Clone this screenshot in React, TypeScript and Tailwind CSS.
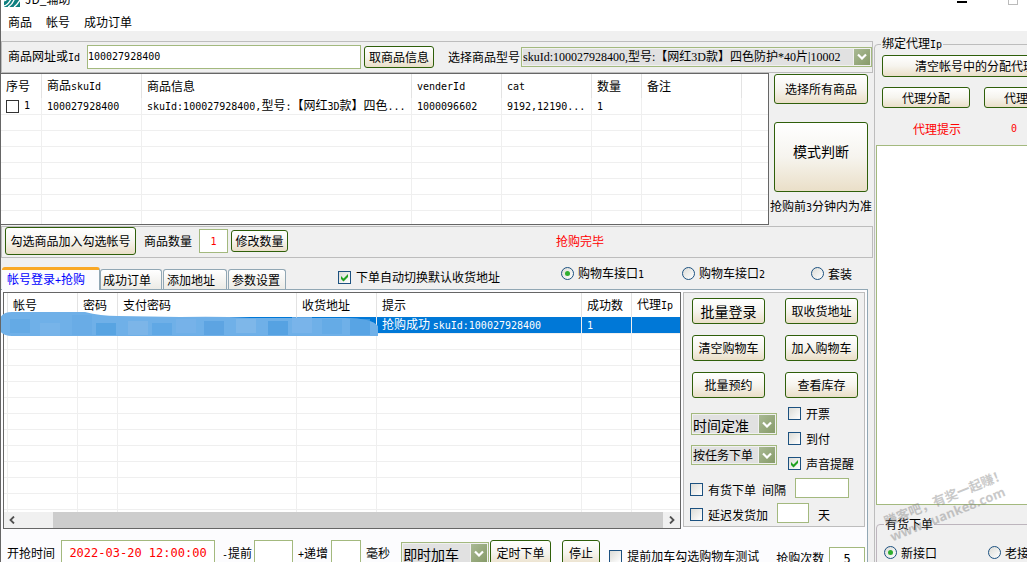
import { Fragment, type ReactNode } from 'react'
import clsx from 'clsx'

const buttonBase =
  'shrink-0 overflow-hidden whitespace-nowrap rounded-[3px] border border-[#2f5f0a] bg-linear-to-b from-white via-[#f6f4ee] to-[#eadfc8]'
const fieldBase = 'min-w-0 border border-[#a3b97e] bg-white font-["DejaVu_Sans_Mono"] outline-none'

// Latin runs are set smaller so that two of them are as wide as one Chinese character
function Mixed({ text }: { text: string }) {
  return (
    <>
      {text.split(/([\x21-\x7e][\x20-\x7e]*)/).map((part, i) =>
        i % 2 ? (
          <span key={i} className="font-['DejaVu_Sans_Mono'] text-[10px]">
            {part}
          </span>
        ) : (
          <Fragment key={i}>{part}</Fragment>
        ),
      )}
    </>
  )
}

function Btn({ children, className }: { children: ReactNode; className?: string }) {
  return (
    <button type="button" className={clsx(buttonBase, className)}>
      {children}
    </button>
  )
}

function Check({ label, checked, className }: { label: string; checked?: boolean; className?: string }) {
  return (
    <label className={clsx('flex shrink-0 items-center gap-[5px] whitespace-nowrap', className)}>
      <span className="relative h-[13px] w-[13px] shrink-0">
        <input
          type="checkbox"
          defaultChecked={checked}
          className="peer block h-[13px] w-[13px] appearance-none border border-[#1c5180] bg-linear-to-br from-[#dcdcd7] to-white"
        />
        <svg viewBox="0 0 13 13" className="pointer-events-none absolute inset-0 hidden peer-checked:block">
          <path d="M3 5v3l2.500 2.500L10 6V3L5.500 7.500z" fill="#21a121" />
        </svg>
      </span>
      <span>
        <Mixed text={label} />
      </span>
    </label>
  )
}

function Radio({ label, name, checked, className }: { label: string; name: string; checked?: boolean; className?: string }) {
  return (
    <label className={clsx('flex h-[13px] shrink-0 items-center gap-1 whitespace-nowrap', className)}>
      <span className="relative h-[13px] w-[13px] shrink-0">
        <input
          type="radio"
          name={name}
          defaultChecked={checked}
          className="peer block h-[13px] w-[13px] appearance-none rounded-full border border-[#1c5180] bg-linear-to-br from-[#dcdcd7] to-white"
        />
        <span className="pointer-events-none absolute top-1 left-1 hidden h-[5px] w-[5px] rounded-full bg-[#2fae2f] peer-checked:block" />
      </span>
      <span>
        <Mixed text={label} />
      </span>
    </label>
  )
}

function Drop({ id, label, value, className }: { id: string; label: string; value: string; className?: string }) {
  return (
    <span className={clsx('relative block shrink-0 border border-[#a3b97e] bg-[#f0f0f0] p-px', className)}>
      <select
        id={id}
        aria-label={label}
        className="block h-full w-full appearance-none overflow-hidden bg-[#e1e1e1] bg-clip-content pr-[17px] outline-none"
      >
        <option>{value}</option>
      </select>
      <span className="pointer-events-none absolute inset-y-px right-px flex w-4 items-center justify-center bg-linear-to-br from-[#a9b994] to-[#879b69]">
        <svg width="10" height="7" viewBox="0 0 10 7">
          <path d="M1 1.500 5 5.500 9 1.500" fill="none" stroke="#fff" strokeWidth="2.200" />
        </svg>
      </span>
    </span>
  )
}

const goodsCols = [
  { title: '序号', width: 'w-[41px]' },
  { title: '商品skuId', width: 'w-[100px]' },
  { title: '商品信息', width: 'w-[270px]' },
  { title: 'venderId', width: 'w-[90px]' },
  { title: 'cat', width: 'w-[90px]' },
  { title: '数量', width: 'w-[50px]' },
  { title: '备注', width: 'w-[100px]' },
  { title: '', width: '' },
]
const goodsRow = ['1', '100027928400', 'skuId:100027928400,型号:【网红3D款】四色...', '1000096602', '9192,12190...', '1', '', '']

const accountCols = [
  { title: '', width: 'w-1' },
  { title: '帐号', width: 'w-[70px]' },
  { title: '密码', width: 'w-10' },
  { title: '支付密码', width: 'w-[179px]' },
  { title: '收货地址', width: 'w-20' },
  { title: '提示', width: 'w-[205px]' },
  { title: '成功数', width: 'w-[50px]' },
  { title: '代理Ip', width: '' },
]
const accountRow = ['', '', '', '', '', '抢购成功 skuId:100027928400', '1', '']

interface GridProps {
  cols: { title: string; width: string }[]
  row: string[]
  blanks: number
  selected?: boolean
  pickable?: boolean
}

function Grid({ cols, row, blanks, selected, pickable }: GridProps) {
  const last = cols.length - 1
  return (
    <table className="w-full table-fixed border-separate border-spacing-0 text-left">
      <thead>
        <tr>
          {cols.map((c, i) => (
            <th
              key={i}
              className={clsx(
                'h-6 p-0 font-normal whitespace-nowrap',
                c.width,
                c.title && 'pl-[5px]',
                i < last && 'border-r border-[#e3e3e3]',
              )}
            >
              <Mixed text={c.title} />
            </th>
          ))}
        </tr>
      </thead>
      <tbody>
        <tr className={clsx(selected && 'bg-[#0078d7] text-white')}>
          {row.map((cell, i) => (
            <td
              key={i}
              className={clsx(
                'h-4 border-b border-[#efefef] p-0 whitespace-nowrap',
                cell && 'pl-[5px]',
                i < last && 'border-r',
              )}
            >
              {pickable && i === 0 ? (
                <label className="flex items-center gap-[5px]">
                  <input type="checkbox" className="h-[13px] w-[13px] appearance-none border border-[#333] bg-white" />
                  <Mixed text={cell} />
                </label>
              ) : (
                <Mixed text={cell} />
              )}
            </td>
          ))}
        </tr>
        {Array.from({ length: blanks }, (_, r) => (
          <tr key={r}>
            {cols.map((_, i) => (
              <td key={i} className={clsx('h-4 border-b border-[#efefef] p-0', i < last && 'border-r')} />
            ))}
          </tr>
        ))}
      </tbody>
    </table>
  )
}

function TitleBar() {
  return (
    <header className="bg-white">
      <div className="flex h-3 items-end gap-[5px] overflow-hidden pb-[5px] pl-[3px]">
        <svg width="16" height="16" viewBox="0 0 16 16" className="shrink-0">
          <rect width="16" height="16" fill="#0e8080" />
          <path
            d="M0 10q3-1 5-5t5-5M0 15q4-1 7-7t8-8M4 16q4-2 6-7t6-6M10 16q3-2 6-7"
            fill="none"
            stroke="#fff"
            strokeWidth="1.300"
          />
        </svg>
        <span className="leading-4">JD_辅助</span>
        <span className="mr-9 mb-1 ml-auto h-[2px] w-[10px] bg-black" />
        <span className="mr-[9px] mb-[2px] h-[10px] w-[10px] border border-[#bbb]" />
      </div>
      <nav className="flex h-[19px] items-center gap-[14px] pl-[7px]">
        <a href="#goods">商品</a>
        <a href="#account">帐号</a>
        <a href="#orders">成功订单</a>
      </nav>
    </header>
  )
}

function GoodsSection() {
  return (
    <>
      <div className="mt-[10px] flex h-8 items-center border border-[#bdbdbd] pb-px pl-[6px]">
        <label htmlFor="url" className="w-[79px] shrink-0">
          <Mixed text="商品网址或Id" />
        </label>
        <input id="url" defaultValue="100027928400" className={clsx(fieldBase, 'h-6 flex-1 text-[10px]')} />
        <Btn className="ml-[3px] h-[22px] w-[70px]">取商品信息</Btn>
        <label htmlFor="model" className="ml-[14px] shrink-0">
          选择商品型号
        </label>
        <Drop
          id="model"
          label="选择商品型号"
          value="skuId:100027928400,型号:【网红3D款】四色防护*40片|10002"
          className="ml-px h-5 w-[351px] indent-[2px] font-['Liberation_Serif','Noto_Sans_CJK_SC',serif]"
        />
      </div>
      <div className="flex h-[152px]">
        <div className="min-w-0 flex-1 overflow-hidden border border-l-0 border-[#666] bg-white">
          <Grid cols={goodsCols} row={goodsRow} blanks={7} pickable />
        </div>
        <div className="flex w-[104px] shrink-0 flex-col items-center pt-px">
          <Btn className="h-[30px] w-[94px]">选择所有商品</Btn>
          <Btn className="mt-[18px] h-[70px] w-[94px] pb-3 text-sm">模式判断</Btn>
          <p className="mt-[7px] whitespace-nowrap">
            <Mixed text="抢购前3分钟内为准" />
          </p>
        </div>
      </div>
      <div className="mt-px flex h-8 items-center border border-[#bdbdbd] pb-[2px] pl-[3px]">
        <Btn className="h-7 w-[131px]">勾选商品加入勾选帐号</Btn>
        <label htmlFor="count" className="ml-2 shrink-0">
          商品数量
        </label>
        <input
          id="count"
          defaultValue="1"
          className={clsx(fieldBase, 'ml-[7px] h-6 w-[29px] text-center text-[10px] text-[#f00]')}
        />
        <Btn className="ml-[3px] h-[22px] w-[57px]">修改数量</Btn>
        <p className="ml-[268px] text-[#f00]">抢购完毕</p>
      </div>
    </>
  )
}

function TabRow() {
  const tab =
    'h-5 shrink-0 self-end rounded-t-[3px] border border-b-0 border-[#91a7b4] bg-linear-to-b from-white to-[#ecebe6] text-left whitespace-nowrap'
  return (
    <div className="mt-[9px] flex h-[22px] items-start pl-px">
      <div role="tablist" className="flex h-full gap-px">
        <button
          type="button"
          role="tab"
          aria-selected="true"
          className="relative -mr-px -mb-px w-[98px] shrink-0 rounded-t-[3px] border-t-3 border-r border-t-[#f9a825] border-r-[#91a7b4] bg-[#fcfcfe] pl-[5px] text-left whitespace-nowrap text-[#00f]"
        >
          <Mixed text="帐号登录+抢购" />
        </button>
        <button type="button" role="tab" className={clsx(tab, 'w-[62px] pl-[2px]')}>成功订单</button>
        <button type="button" role="tab" className={clsx(tab, 'w-16 pl-[3px]')}>添加地址</button>
        <button type="button" role="tab" className={clsx(tab, 'w-[58px] pl-[3px]')}>参数设置</button>
      </div>
      <Check label="下单自动切换默认收货地址" checked className="mt-[3px] ml-[52px]" />
      <Radio name="cart" label="购物车接口1" checked className="ml-[61px]" />
      <Radio name="cart" label="购物车接口2" className="ml-[38px]" />
      <Radio name="cart" label="套装" className="ml-[46px]" />
    </div>
  )
}

const smudges = [
  [10, 8, 14, '#5fa8e4'], [40, 12, 16, '#7bb6ea'], [72, 4, 20, '#66abe6'], [96, 12, 12, '#4f9fe0'],
  [128, 10, 14, '#82b8e8'], [152, 12, 12, '#5aa5e4'], [176, 8, 14, '#79b4e9'], [204, 10, 14, '#559fdf'],
  [236, 8, 14, '#84baea'], [268, 10, 14, '#4c9ce0'], [292, 6, 16, '#7db7eb'], [322, 8, 15, '#61a9e5'],
  [350, 8, 16, '#4fa0e2'],
] as const

function AccountTable() {
  return (
    <div className="relative h-[237px] min-w-0 flex-1">
      <div className="flex h-full flex-col border border-[#666] bg-white">
        <div className="min-h-0 flex-1 overflow-hidden">
          <Grid cols={accountCols} row={accountRow} blanks={12} selected />
        </div>
        <div className="flex h-4 shrink-0 items-center justify-between bg-[#f0f0f0] px-1">
          <svg width="8" height="8" viewBox="0 0 8 8" className="shrink-0">
            <path d="M6 .500 2.500 4 6 7.500" fill="none" stroke="#505050" strokeWidth="1.800" />
          </svg>
          <span className="ml-[37px] h-full flex-1 bg-[#cdcdcd]" />
          <svg width="8" height="8" viewBox="0 0 8 8" className="ml-[5px] shrink-0">
            <path d="M2 .500 5.500 4 2 7.500" fill="none" stroke="#505050" strokeWidth="1.800" />
          </svg>
        </div>
      </div>
      <svg width="379" height="26" viewBox="0 0 379 26" className="pointer-events-none absolute top-[19px] -left-[3px]">
        <path
          d="M0 7Q3 1 12 1H85Q100 5 118 5L180 6Q220 5 250 7H345Q372 7 378 15V25H12Q3 25 0 20Z"
          fill="#6fb0e8"
        />
        {smudges.map(([x, y, h, fill]) => (
          <rect key={x} x={x} y={y} width={20} height={Math.min(h, 25 - y)} fill={fill} opacity={0.7} />
        ))}
      </svg>
    </div>
  )
}

function ActionPanel() {
  return (
    <div className="ml-[2px] h-[235px] w-[182px] shrink-0 border border-[#bdbdbd] bg-[#f0f0f0] pt-[5px] pl-[6px]">
      <div className="ml-[2px] grid grid-cols-[73px_73px] gap-x-5 gap-y-[11px]">
        <Btn className="h-[26px] text-sm">批量登录</Btn>
        <Btn className="h-[26px]">取收货地址</Btn>
        <Btn className="h-[26px]">清空购物车</Btn>
        <Btn className="h-[26px]">加入购物车</Btn>
        <Btn className="h-[26px]">批量预约</Btn>
        <Btn className="h-[26px]">查看库存</Btn>
      </div>
      <div className="mt-[9px] flex items-start gap-[11px]">
        <div className="flex flex-col gap-[10px] pt-[6px] pl-px">
          <Drop id="timing" label="时间" value="时间定准" className="h-[22px] w-[86px] text-sm" />
          <Drop id="order" label="下单" value="按任务下单" className="h-5 w-[86px]" />
        </div>
        <div className="flex flex-col gap-3">
          <Check label="开票" className="h-[13px]" />
          <Check label="到付" className="h-[13px]" />
          <Check label="声音提醒" checked className="h-[13px]" />
        </div>
      </div>
      <div className="mt-2 flex h-5 items-center">
        <Check label="有货下单" className="pt-[3px]" />
        <label htmlFor="interval" className="ml-[6px] pt-[3px]">间隔</label>
        <input id="interval" className={clsx(fieldBase, 'ml-[9px] h-5 w-[54px] text-[10px]')} />
      </div>
      <div className="mt-[5px] flex h-5 items-center">
        <Check label="延迟发货加" className="pt-[3px]" />
        <input aria-label="延迟天数" className={clsx(fieldBase, 'ml-[9px] h-5 w-8 text-[10px]')} />
        <span className="ml-[9px] pt-[3px]">天</span>
      </div>
    </div>
  )
}

function TimerRow() {
  const text = 'shrink-0 leading-[26px] whitespace-nowrap'
  return (
    <div className="mt-[11px] flex items-start pl-1">
      <label htmlFor="start" className={text}>开抢时间</label>
      <input
        id="start"
        defaultValue="2022-03-20 12:00:00"
        className={clsx(fieldBase, 'ml-[6px] h-[26px] w-[154px] shrink-0 text-center text-xs text-[#f00]')}
      />
      <label htmlFor="ahead" className={clsx(text, 'ml-[7px]')}><Mixed text="-提前" /></label>
      <input id="ahead" className={clsx(fieldBase, 'ml-[2px] h-[26px] w-[39px] shrink-0 text-[10px]')} />
      <label htmlFor="step" className={clsx(text, 'ml-[5px]')}><Mixed text="+递增" /></label>
      <input id="step" className={clsx(fieldBase, 'ml-[3px] h-[26px] w-[30px] shrink-0 text-[10px]')} />
      <span className={clsx(text, 'ml-[5px]')}>毫秒</span>
      <Drop id="mode" label="加车方式" value="即时加车" className="mt-[2px] ml-[11px] h-[22px] w-[88px] text-sm" />
      <Btn className="ml-px h-[26px] w-[61px]">定时下单</Btn>
      <Btn className="ml-[11px] h-[26px] w-[38px]">停止</Btn>
      <Check label="提前加车勾选购物车测试" className="ml-[9px] h-8" />
      <label htmlFor="times" className="mt-[11px] ml-[17px] shrink-0">抢购次数</label>
      <input id="times" defaultValue="5" className={clsx(fieldBase, 'mt-[7px] ml-[5px] h-6 w-9 shrink-0 text-center text-xs')} />
    </div>
  )
}

function ProxyPanel() {
  return (
    <aside className="relative w-[154px] shrink-0 overflow-hidden pt-[5px] pl-px">
      <fieldset className="w-[200px] rounded-[4px] border border-[#bdbdbd] pb-10 pl-px">
        <legend className="ml-[5px] px-px">
          <Mixed text="绑定代理Ip" />
        </legend>
        <div className="flex flex-col pt-[3px] pl-[6px]">
          <Btn className="h-[22px] w-[186px]">清空帐号中的分配代理</Btn>
          <div className="mt-[10px] flex gap-[14px]">
            <Btn className="h-[21px] w-[88px]">代理分配</Btn>
            <Btn className="h-[21px] w-[88px] pl-[19px] text-left">代理</Btn>
          </div>
          <p className="mt-[14px] flex gap-[50px] pl-[31px] text-[#f00]">
            <span>代理提示</span>
            <Mixed text="0" />
          </p>
        </div>
        <textarea
          aria-label="代理列表"
          className="mt-[9px] block h-[360px] w-[190px] resize-none border border-[#a3b97e] bg-white outline-none"
        />
        <fieldset className="mt-3 rounded-[4px] border border-[#bdb5bd] pt-[15px] pb-6 pl-[7px]">
          <legend className="px-px">有货下单</legend>
          <div className="flex gap-[51px]">
            <Radio name="api" label="新接口" checked />
            <Radio name="api" label="老接口" />
          </div>
        </fieldset>
      </fieldset>
      <div className="pointer-events-none absolute top-[458px] left-[10px] -rotate-22 text-[13px] leading-4 font-bold whitespace-nowrap text-[#888] opacity-45">
        <p>赚客吧，有奖一起赚！</p>
        <p className="font-['Open_Sans']">www.zuanke8.com</p>
      </div>
    </aside>
  )
}

export default function App() {
  return (
    <div className="flex h-screen flex-col overflow-hidden border-l border-[#666] bg-[#f0f0f0] font-['Noto_Sans_CJK_SC',sans-serif] text-xs leading-[14px] text-black">
      <TitleBar />
      <div className="flex min-h-0 flex-1">
        <main className="min-w-0 flex-1">
          <GoodsSection />
          <TabRow />
          <section className="mr-[5px] border-t border-r border-[#91a7b4] bg-[#fcfcfe] pt-[2px] pr-[2px] pb-10 pl-[2px]">
            <div className="flex items-start">
              <AccountTable />
              <ActionPanel />
            </div>
            <TimerRow />
          </section>
        </main>
        <ProxyPanel />
      </div>
    </div>
  )
}
